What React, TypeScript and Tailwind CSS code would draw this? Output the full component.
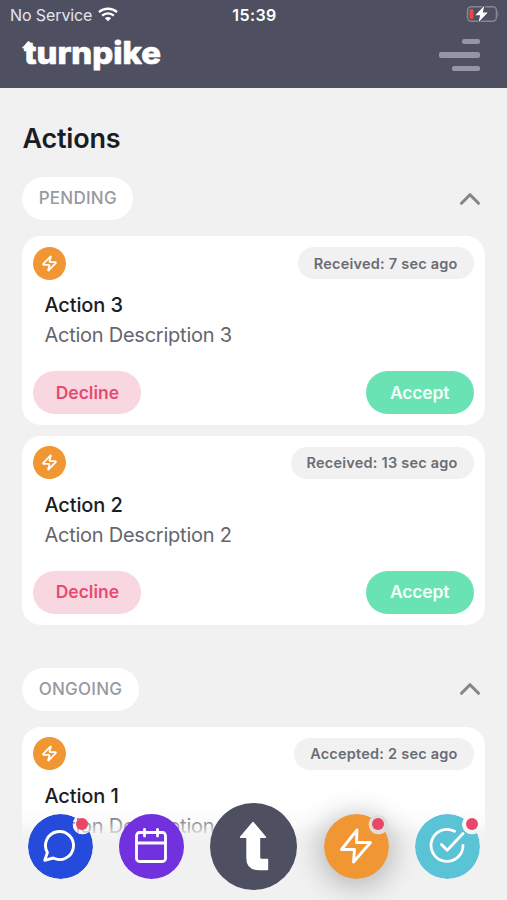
import type { ReactNode } from 'react';
import { Zap, ChevronUp } from 'lucide-react';

type Action = { title: string; description: string; status: string; pending?: boolean };

function StatusBar() {
  return (
    <div className="flex h-[30px] items-center justify-between pr-2 pl-[10px] text-[#e4e5ec]">
      <div className="flex w-[140px] items-center gap-[6px]">
        <span className="text-[16px] tracking-[-0.1px] whitespace-nowrap">No Service</span>
        <svg className="mt-[-1px]" width="20" height="15" viewBox="0 0 20 15" fill="none" stroke="white">
          <path d="M1 5.2C6 .6 14 .6 19 5.2" strokeWidth="2.5" />
          <path d="M4.2 8.6C7.5 5.6 12.5 5.6 15.8 8.6" strokeWidth="2.4" />
          <path d="M10 14.3L6.9 11.3C8.5 9.7 11.5 9.7 13.1 11.3Z" fill="white" stroke="none" />
        </svg>
      </div>
      <span className="text-[16px] font-semibold tracking-[0.4px] text-white">15:39</span>
      <div className="mt-[-2px] flex w-[140px] justify-end">
        <svg width="34" height="18" viewBox="0 0 34 18" fill="none">
          <rect x="2.5" y="1.7" width="29" height="14.6" rx="4" stroke="#858795" strokeWidth="1.5" />
          <path d="M32.6 6.5Q34.3 9 32.6 11.5Z" fill="#858795" />
          <rect x="4.5" y="4" width="4" height="10" rx="1.3" fill="#ee4545" />
          <path d="M19.3 .8L10.3 10.2H15.2L13.5 17.2L22.8 7.6H17.8Z" fill="white" stroke="#4e5062" strokeWidth="2" paintOrder="stroke" />
        </svg>
      </div>
    </div>
  );
}

function Header() {
  return (
    <header className="h-[88px] shrink-0 bg-[#4e5062]">
      <StatusBar />
      <div className="flex h-[50px] items-center justify-between pr-[27px] pl-[22px]">
        <svg width="150" height="50" viewBox="0 -5 150 50" fill="white">
          <text x="2" y="28.5" textLength="137" lengthAdjust="spacingAndGlyphs" stroke="white" strokeWidth="0.7" strokeLinejoin="round" className="font-['Inter'] text-[31px] font-extrabold">turnpike</text>
          <path d="M.4 12.9L6.6 6.2L12.8 12.9Z" stroke="white" strokeWidth="0.8" strokeLinejoin="round" />
        </svg>
        <div className="flex flex-col items-end gap-[8px]">
          <div className="h-[5.5px] w-[18px] rounded-[2px] bg-[#9496a5]" />
          <div className="h-[5.5px] w-[41px] rounded-[2px] bg-[#9496a5]" />
          <div className="h-[5.5px] w-[28px] rounded-[2px] bg-[#9496a5]" />
        </div>
      </div>
    </header>
  );
}

function SectionHeader({ label }: { label: string }) {
  return (
    <div className="flex h-[43px] items-center justify-between">
      <span className="flex h-full items-center rounded-full bg-white px-[16.3px] pt-px text-[17px] font-medium tracking-[0.25px] text-[#97999f]">{label}</span>
      <ChevronUp className="mr-[-2.5px] h-[34px] w-[34px] text-[#85868b]" strokeWidth={2.2} />
    </div>
  );
}

function Card({ title, description, status, pending }: Action) {
  return (
    <article className="flex h-[189px] flex-col rounded-[19px] bg-white px-[11px] pt-[11px]">
      <div className="flex h-8 items-center justify-between">
        <span className="flex h-[33px] w-[33px] items-center justify-center rounded-full bg-[#f09733]">
          <Zap className="h-[17px] w-[17px] text-white" strokeWidth={2.5} />
        </span>
        <span className="flex h-8 items-center rounded-full bg-[#f1f1f2] px-[16px] pt-px text-[14.5px] font-semibold tracking-[0.22px] text-[#6a6c73]">{status}</span>
      </div>
      <h2 className="mt-[11px] pl-[11px] text-[20px] leading-[30px] font-medium tracking-[-0.12px] text-[#1b1d24]">{title}</h2>
      <p className="pl-[11px] text-[20px] leading-[30px] tracking-[-0.24px] text-[#63666e]">{description}</p>
      {pending && (
        <div className="mt-[21px] flex justify-between">
          <button className="h-[43px] w-[108px] rounded-full bg-[#f9d7e0] pt-px text-[17.5px] font-semibold text-[#e64b74]">Decline</button>
          <button className="h-[43px] w-[108px] rounded-full bg-[#69e2b4] pt-px text-[17.5px] font-semibold tracking-[-0.15px] text-[#f4fffa]">Accept</button>
        </div>
      )}
    </article>
  );
}

type NavButtonProps = { color: string; dot?: 'near' | 'far'; glow?: boolean; children: ReactNode };

const cutouts = {
  near: '[mask-image:radial-gradient(circle_at_54.5px_10.5px,transparent_9.5px,black_10.2px)]',
  far: '[mask-image:radial-gradient(circle_at_57px_10.5px,transparent_9.5px,black_10.2px)]',
};

function NavButton({ color, dot, glow, children }: NavButtonProps) {
  return (
    <button className="relative h-[65px] w-[65px]">
      {glow && <span className="absolute inset-1 rounded-full shadow-[0_4px_28px_8px_rgba(0,0,0,0.24)]" />}
      {glow && <span className="absolute top-[1px] right-[1px] h-[20px] w-[20px] rounded-full bg-[#dedede]" />}
      <span className={`relative flex h-full w-full items-center justify-center rounded-full text-white ${color} ${dot ? cutouts[dot] : ''}`}>{children}</span>
      {dot && <span className={`absolute top-[4.5px] h-3 w-3 rounded-full bg-[#e8476a] ${dot === 'far' ? 'left-[51px]' : 'left-[48.5px]'}`} />}
    </button>
  );
}

function BottomNav() {
  return (
    <nav className="absolute inset-x-0 bottom-0 flex h-[112px] items-center justify-between bg-[linear-gradient(to_bottom,rgba(241,241,241,0)_18px,rgba(241,241,241,0.3)_34px,rgba(241,241,241,0.85)_46px,#f1f1f1_58px)] pt-[4px] pr-[27px] pl-[27.6px]">
      <NavButton color="bg-[#244bdb]" dot="near">
        <svg width="36" height="36" viewBox="0 0 36 36" fill="none" stroke="currentColor" strokeWidth="2.9" strokeLinejoin="round">
          <path d="M2.8 32.3L5.4 24.5A14 14 0 1 1 11.2 30Z" />
        </svg>
      </NavButton>
      <NavButton color="bg-[#7131df]">
        <svg width="36" height="38" viewBox="0 0 36 38" fill="none" stroke="currentColor" strokeWidth="2.8" strokeLinecap="round">
          <rect x="3.5" y="5.5" width="29" height="29" rx="3" />
          <path d="M3.5 16H32.5M11.5 2.5V9M24.5 2.5V9" />
        </svg>
      </NavButton>
      <button className="flex h-[87px] w-[87px] items-center justify-center rounded-full bg-[#4e5062]">
        <svg className="mt-[-1px]" width="30" height="50" viewBox="0 0 30 50" fill="white" stroke="white" strokeWidth="1.4" strokeLinejoin="round">
          <path d="M14 1.5L26.5 16.2H20.5V36.5Q20.5 38.5 22.5 38.5H28.5V48.5H20Q8 48.5 8 37V16.2H1.5Z" />
        </svg>
      </button>
      <NavButton color="bg-[#f09733]" dot="near" glow>
        <svg width="36" height="38" viewBox="0 0 36 38" fill="none" stroke="currentColor" strokeWidth="2.9" strokeLinejoin="round">
          <path d="M19 3L3.5 22.5H16.5L15.5 35L32.5 15.5H18.5Z" />
        </svg>
      </NavButton>
      <NavButton color="bg-[#5bc3d6]" dot="far">
        <svg width="36" height="36" viewBox="0 0 36 36" fill="none" stroke="currentColor" strokeWidth="2.8" strokeLinecap="round" strokeLinejoin="round">
          <path d="M25.5 3.3A16 16 0 1 0 34 17.5M34 5.5L18.2 22.3L12.5 16.5" />
        </svg>
      </NavButton>
    </nav>
  );
}

export default function App() {
  return (
    <div className="relative flex h-[900px] w-full flex-col overflow-hidden bg-[#f1f1f1] font-['Inter',sans-serif]">
      <Header />
      <main className="px-[22.4px] pt-[30.5px]">
        <h1 className="text-[27px] leading-10 font-semibold tracking-[-0.2px] text-[#1b1d24]">Actions</h1>
        <section className="mt-[18.5px]">
          <SectionHeader label="PENDING" />
          <div className="mt-4 flex flex-col gap-[10.6px]">
            <Card title="Action 3" description="Action Description 3" status="Received: 7 sec ago" pending />
            <Card title="Action 2" description="Action Description 2" status="Received: 13 sec ago" pending />
          </div>
        </section>
        <section className="mt-[43px]">
          <SectionHeader label="ONGOING" />
          <div className="mt-4">
            <Card title="Action 1" description="Action Description 1" status="Accepted: 2 sec ago" />
          </div>
        </section>
      </main>
      <BottomNav />
    </div>
  );
}
